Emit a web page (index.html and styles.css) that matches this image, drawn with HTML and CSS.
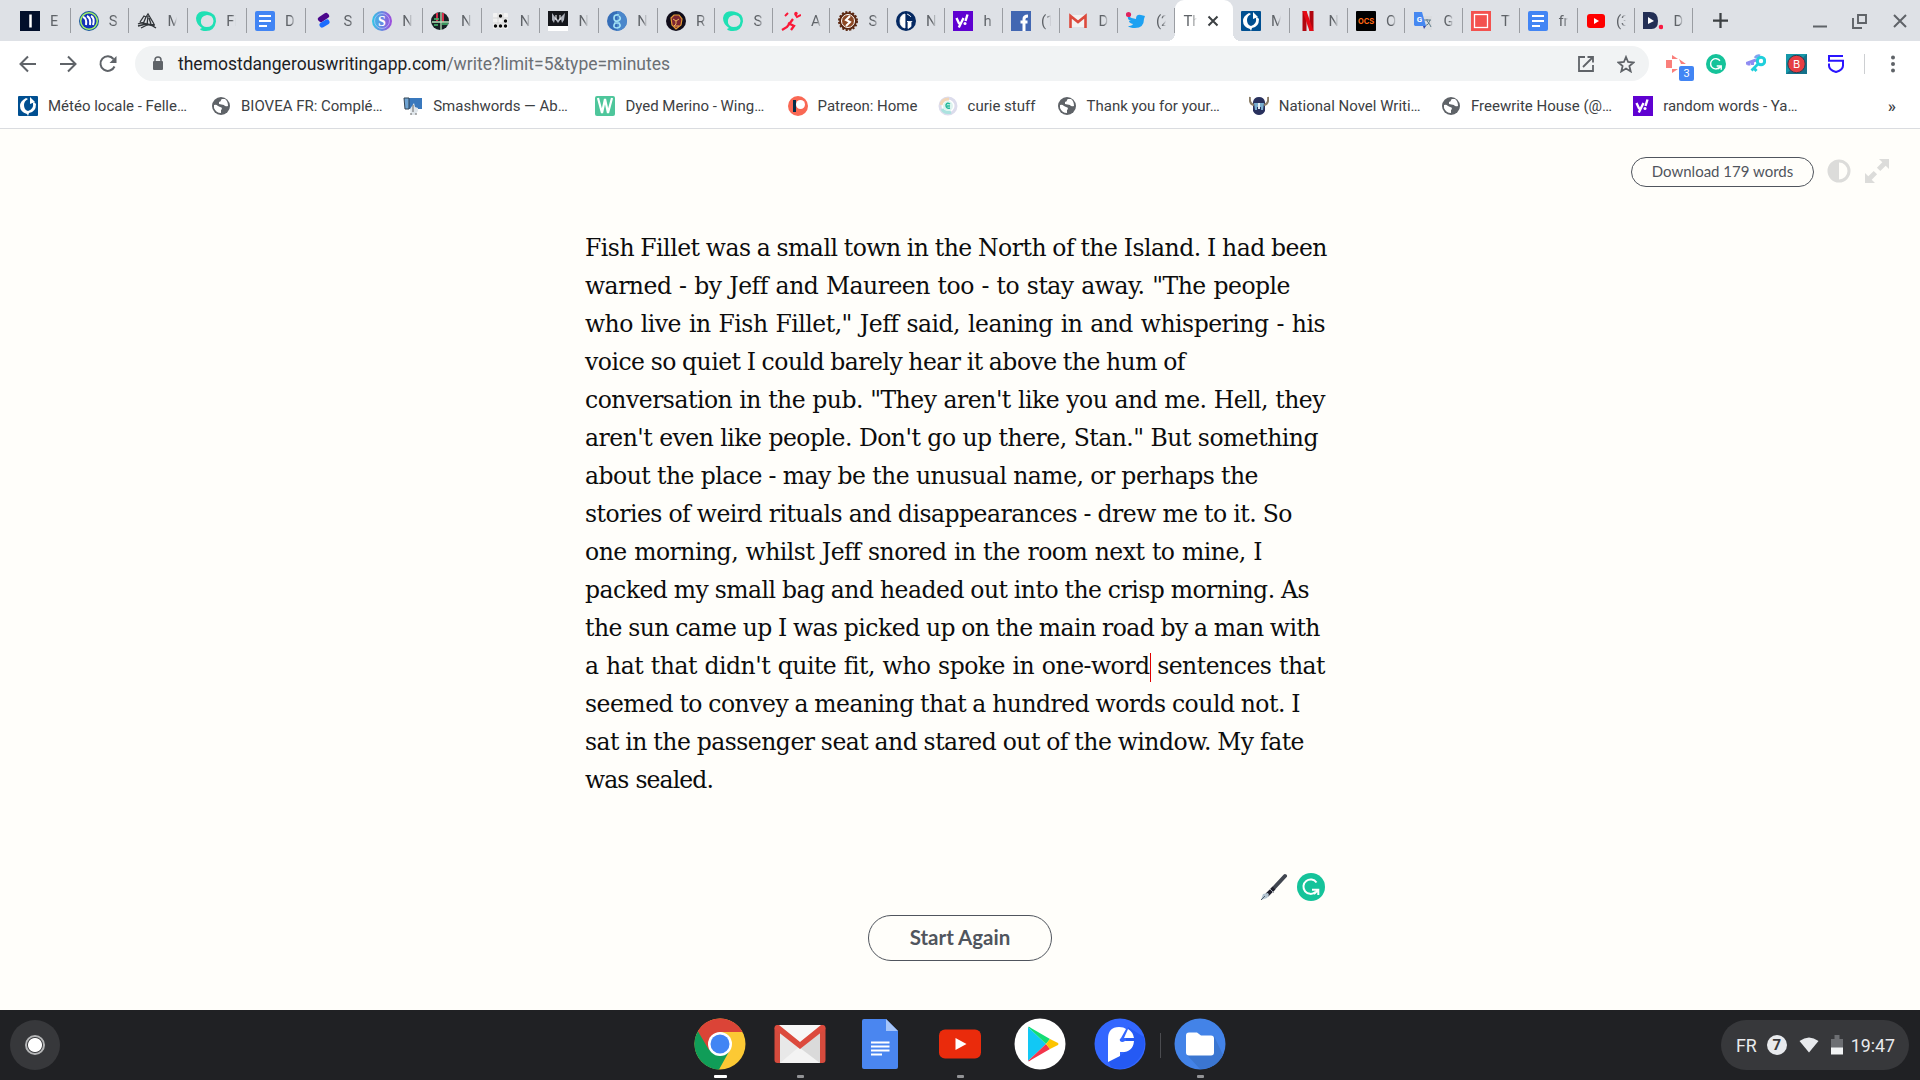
FILE: index.html
```html
<!DOCTYPE html>
<html lang="en">
<head>
    <meta charset="UTF-8">
    <meta name="viewport" content="width=device-width, initial-scale=1.0">
    <title>The Most Dangerous Writing App</title>
    <link rel="stylesheet" href="styles.css">
</head>
<body>
    <!-- Shared icons -->
    <svg class="sprite">
        <symbol id="globe" viewBox="0 0 20 20"><circle cx="10" cy="10" r="9" fill="#5f6368"/><path d="M3 9q2-1 4 1l2 1q2 0 2 2l-1 1v3q-5 0-7-5zM11 3q-2 1-1 2l-2 1v2l5 1q1 2 4 1 0-5-3-7z" fill="#fff"/></symbol>
        <symbol id="docs" viewBox="0 0 20 20"><rect width="20" height="20" rx="2" fill="#4285f4"/><path d="M4 5h12M4 10h12M4 15h8" stroke="#fff" stroke-width="2.2"/></symbol>
        <symbol id="steem" viewBox="0 0 20 20"><path d="M3 1.5Q7-.5 11 .6 20 2 20 10.500 18.500 20 10 20q-5 0-6-2l2-1Q0 13 0 7q0-3 3-5.500z" fill="#1fe0b4"/><path d="M5 12q-1-7 6-8 6 0 6.500 6-.5 6-7 6-4 0-5.500-4z" fill="#dee1e6"/></symbol>
        <symbol id="meteo" viewBox="0 0 20 20"><rect width="20" height="20" rx="1" fill="#004f91"/><path d="M8 2q-6 3-6 8 0 6 7 8l1 2 1-3q7-1 7-9l-2-2-1 1q1 6-5 8-4-1-4-6 0-4 4-6zM12 1l5 5-5 2z" fill="#fff"/></symbol>
        <symbol id="yahoo" viewBox="0 0 20 20"><rect width="20" height="20" fill="#5f01d1"/><path d="M3.500 7l2.800 6M10.500 7l-4.700 9.500M14.500 3.500l-2 6.500" stroke="#fff" stroke-width="2.400" fill="none"/><circle cx="12" cy="12.500" r="1.500" fill="#fff"/></symbol>
        <symbol id="grammarly" viewBox="0 0 28 28"><circle cx="14" cy="14" r="14" fill="#15c39a"/><path d="M19.500 9.500A7.200 7.200 0 1 0 18.500 19M15 16.800h6.300v5.200M21 17l-4 4" fill="none" stroke="#fff" stroke-width="2"/></symbol>
    </svg>

    <div class="tabstrip">
        <div class="tab wide"><svg class="favicon" viewBox="0 0 20 20"><rect width="20" height="20" fill="#020f2b"/><path d="M10.500 3.500v13" stroke="#fff" stroke-width="2.500"/></svg><span>E</span></div>
        <div class="tab wide"><svg class="favicon" viewBox="0 0 20 20"><circle cx="10" cy="10" r="10" fill="#16579a"/><circle cx="10" cy="10" r="9" fill="#a5f263"/><circle cx="10" cy="10" r="7.500" fill="#1433b8"/><path d="M4 6q4 1 3 8M8 5q4 2 3 9M12 5q4 2 2 9" stroke="#fff" stroke-width="2" fill="none"/></svg><span>S</span></div>
        <div class="tab wide"><svg class="favicon" viewBox="0 0 20 20"><path d="M3 11l4-6 2 1 2-3 6 10M9 6l-3 7M11 5l-1 9M12 7l2 6M1 13q6-3 9 1 4-1 9 3M1 15l8-2 9 1M4 17l6-3" fill="none" stroke="#303438" stroke-width="1.300"/></svg><span>M</span></div>
        <div class="tab wide"><svg class="favicon"><use href="#steem"/></svg><span>Fi</span></div>
        <div class="tab wide"><svg class="favicon"><use href="#docs"/></svg><span>D</span></div>
        <div class="tab wide"><svg class="favicon" viewBox="0 0 20 20"><path d="M7 9l6-4M6 8l6-4" stroke="#4b078c" stroke-width="4.500" stroke-linecap="round"/><path d="M8 14l5-3" stroke="#1c6dff" stroke-width="5" stroke-linecap="round"/></svg><span>S</span></div>
        <div class="tab wide"><svg class="favicon" viewBox="0 0 20 20"><defs><linearGradient id="ng"><stop stop-color="#31c7e6"/><stop offset="1" stop-color="#a049dc"/></linearGradient></defs><circle cx="10" cy="10" r="10" fill="url(#ng)"/><circle cx="10" cy="10" r="7.500" fill="none" stroke="#cbd0ff" stroke-width=".6"/><text x="10" y="15" class="glyph">S</text></svg><span>N</span></div>
        <div class="tab wide"><svg class="favicon" viewBox="0 0 20 20"><circle cx="9" cy="10" r="9" fill="#162024"/><path d="M6 2v8M12 2v9" stroke="#d52d4b" stroke-width="2"/><path d="M3 8h5M11 13h6M3 14h4" stroke="#45bd70" stroke-width="1.500"/><path d="M10 1v18M1 11h17" stroke="#b7e6bb" stroke-width="1.300"/></svg><span>N</span></div>
        <div class="tab wide"><svg class="favicon" viewBox="0 0 20 20"><rect x="3" y="2" width="15" height="16" rx="1" fill="#f2f2f2"/><path d="M8 2v16M13 2v16M3 7h15M3 12h15" stroke="#ccc" stroke-width=".7"/><g fill="#080808"><circle cx="10.500" cy="5" r="1.700"/><circle cx="15.500" cy="10" r="1.700"/><circle cx="5.500" cy="15" r="1.700"/><circle cx="10.500" cy="15" r="1.700"/><circle cx="15.500" cy="15" r="1.700"/></g></svg><span>N</span></div>
        <div class="tab wide"><svg class="favicon" viewBox="0 0 20 20"><rect width="20" height="20" fill="#fff"/><rect width="20" height="15" fill="#15171c"/><path d="M4 2l3 4 3 3 3-3 4-4-1 7-2 3-1-4-3 4-3-4-1 4-2-3z" fill="#adb1bb"/><path d="M8 4v5M12 4v5" stroke="#fff"/></svg><span>N</span></div>
        <div class="tab wide"><svg class="favicon" viewBox="0 0 20 20"><circle cx="10" cy="10" r="10" fill="#356eb8"/><path d="M10 0a10 10 0 0 1 0 20z" fill="#4b87cb"/><path d="M12 4q-5-1-5 3t4 3q4-2 1-5M8 12q-3 5 2 5 5-1 2-5z" fill="none" stroke="#a2e2f5" stroke-width="1.700"/></svg><span>N</span></div>
        <div class="tab"><svg class="favicon" viewBox="0 0 20 20"><circle cx="10" cy="10" r="10" fill="#110d1b"/><path d="M5 7l3-3h5l3 4-1 6-5 4-4-4z" fill="#7c2532" stroke="#e49b35" stroke-width="1.200"/><path d="M7 8l3 2 3-2M10 10v3l-2 2h5" fill="none" stroke="#efb45a"/></svg><span>R</span></div>
        <div class="tab"><svg class="favicon"><use href="#steem"/></svg><span>S</span></div>
        <div class="tab"><svg class="favicon" viewBox="0 0 20 20"><g fill="none" stroke="#fa1838" stroke-width="2.300"><path d="M1 19l5-3 3-4 3-4M7 12l6 3-3 4"/></g><path d="M4 5l3-3M14 3l2 3 4-2" fill="none" stroke="#fa1838" stroke-width="2"/><circle cx="15" cy="2.500" r="1.700" fill="#fa1838"/></svg><span>A</span></div>
        <div class="tab"><svg class="favicon" viewBox="0 0 20 20"><circle cx="10" cy="10" r="8.800" fill="#5b2812" stroke="#5b2812" stroke-width="2.400" stroke-dasharray="2 1.500"/><circle cx="10" cy="10" r="6.500" fill="#8c4824" stroke="#fff"/><path d="M12 5l-4 4 4 2-4 4" fill="none" stroke="#fff" stroke-width="2"/></svg><span>S</span></div>
        <div class="tab"><svg class="favicon" viewBox="0 0 20 20"><circle cx="10" cy="10" r="10" fill="#052962"/><path d="M9 3q-5 1-5 7t5 7V3zM11 3q3 1 4 3M11 10.500h5l-1 1v4l-3 2v-7z" fill="#fff" stroke="#fff" stroke-width=".8"/></svg><span>N</span></div>
        <div class="tab"><svg class="favicon"><use href="#yahoo"/></svg><span>h</span></div>
        <div class="tab"><svg class="favicon" viewBox="0 0 20 20"><rect width="20" height="20" fill="#4267b2"/><path d="M13 20V8q0-3 4-3M9.500 11h7" stroke="#fff" stroke-width="3" fill="none"/></svg><span>(1</span></div>
        <div class="tab"><svg class="favicon" viewBox="0 0 20 20"><path d="M3 4h14v12H3z" fill="#f2f2f2"/><path d="M2.500 17V5l7.500 6 7.500-6v12" stroke="#dc4a3d" stroke-width="2.600" fill="none"/></svg><span>D</span></div>
        <div class="tab"><svg class="favicon" viewBox="0 0 20 20"><path d="M2 5q4 3 8 3 0-5 5-4l4 1-1 3q0 9-9 9-5 0-7-2 4 0 5-2-4-1-4-3l2 0Q1 9 2 5z" fill="#1da1f2"/><circle cx="2.500" cy="3.500" r="2.600" fill="#e0245e"/></svg><span>(2</span></div>
        <div class="tab active"><span>Th</span><svg class="close" viewBox="0 0 12 12"><path d="M1.500 1.500l9 9M10.500 1.500l-9 9" stroke="#3c4043" stroke-width="2"/></svg></div>
        <div class="tab"><svg class="favicon"><use href="#meteo"/></svg><span>M</span></div>
        <div class="tab"><svg class="favicon" viewBox="0 0 20 20"><path d="M4.500 0h4v20h-4zM11.500 0h4v20h-4z" fill="#b1060f"/><path d="M4.500 0h4l7 20h-4z" fill="#e50914"/></svg><span>N</span></div>
        <div class="tab"><svg class="favicon" viewBox="0 0 20 20"><rect width="20" height="20" rx="1" fill="#000"/><text x="10" y="12.700" class="ocs">OCS</text></svg><span>O</span></div>
        <div class="tab"><svg class="favicon" viewBox="0 0 20 20"><path d="M8 5h11v14h-8z" fill="#dadce0"/><path d="M11 9h7M14 8v2q3 3 4 6M17 9q-1 5-5 6" stroke="#607d8b" fill="none"/><path d="M1 1h8l4 14H2l-1-1z" fill="#4688f1"/><path d="M10 15h3l-2 3z" fill="#3749ab"/><text x="6.500" y="11" class="g-small">G</text></svg><span>G</span></div>
        <div class="tab"><svg class="favicon" viewBox="0 0 20 20"><rect width="20" height="20" fill="#f3524f"/><rect x="3.500" y="3.500" width="13" height="13" fill="none" stroke="#fff" stroke-width="1.300"/></svg><span>T</span></div>
        <div class="tab"><svg class="favicon"><use href="#docs"/></svg><span>fr</span></div>
        <div class="tab"><svg class="favicon" viewBox="0 0 20 20"><rect x="1" y="3" width="18" height="14" rx="3" fill="#f00"/><path d="M8 7l5 3-5 3z" fill="#fff"/></svg><span>(3</span></div>
        <div class="tab"><svg class="favicon" viewBox="0 0 20 20"><path d="M0 1h7q8 0 8 9t-8 8H0z" fill="#232f55"/><path d="M5 6l6 4-6 3z" fill="#fff"/><circle cx="18" cy="16" r="2.300" fill="#f91942"/></svg><span>D</span></div>
        <svg class="new-tab" viewBox="0 0 16 16"><path d="M8 0v16M0 8h16" stroke="#3c4043" stroke-width="2.400"/></svg>
        <div class="window-buttons">
            <svg viewBox="0 0 16 16"><path d="M1 13.500h14" stroke="#5f6368" stroke-width="2"/></svg>
            <svg viewBox="0 0 16 16"><path d="M6 2h8v8H6zM1 5v10h9" fill="none" stroke="#5f6368" stroke-width="1.900"/></svg>
            <svg viewBox="0 0 16 16"><path d="M2 2l12 12M14 2L2 14" stroke="#5f6368" stroke-width="2"/></svg>
        </div>
    </div>

    <div class="toolbar">
        <div class="tool"><svg width="18" height="18" viewBox="0 0 18 18"><path d="M17 9H2M9 1.500L1.500 9 9 16.500" class="stroke"/></svg></div>
        <div class="tool"><svg width="18" height="18" viewBox="0 0 18 18"><path d="M1 9h15M9 1.500L16.500 9 9 16.500" class="stroke"/></svg></div>
        <div class="tool"><svg width="18" height="18" viewBox="0 0 18 18"><path d="M15.500 11.500A7.300 7.300 0 1 1 14.500 4" class="stroke"/><path d="M17.500 1v7h-7z" fill="#5f6368"/></svg></div>
        <div class="omnibox">
            <svg class="lock" viewBox="0 0 12 15"><path d="M3 6V4a3 3 0 0 1 6 0v2" fill="none" stroke="#5f6368" stroke-width="1.500"/><rect x="1" y="5" width="10" height="9" rx="1" fill="#5f6368"/></svg>
            <div class="url">themostdangerouswritingapp.com<span>/write?limit=5&amp;type=minutes</span></div>
            <div class="tool"><svg width="16" height="16" viewBox="0 0 16 16"><path d="M7 1H1v14h14V9M9.500 1H15v5.500M14.500 1.500L5 11" class="stroke thin"/></svg></div>
            <div class="tool"><svg width="18" height="18" viewBox="0 0 18 18"><path d="M9 2l2.100 5 5.400.5-4.100 3.600 1.300 5.300L9 13.600l-4.700 2.800 1.300-5.300-4.100-3.600 5.400-.5z" class="stroke thin"/></svg></div>
        </div>
        <div class="extensions">
            <div class="tool ext"><svg width="20" height="18" viewBox="0 0 20 18"><path d="M0 5h6v8H0zM6 0l6 4H6zM13 4l7 5h-5zM6 18l6-4H6z" fill="#fa7f7b"/></svg><b class="badge">3</b></div>
            <div class="tool"><svg width="20" height="20"><use href="#grammarly"/></svg></div>
            <div class="tool"><svg width="20" height="20" viewBox="0 0 20 20"><path d="M0 9.500l10-3.500M3 8.500v3M6.500 8v3" stroke="#8f8cf2" stroke-width="3"/><path d="M9 4q2-3 5-2" fill="none" stroke="#7fa4f0" stroke-width="3"/><circle cx="15" cy="7" r="3.700" fill="none" stroke="#20cfdb" stroke-width="3"/><path d="M12.500 9.500L5.500 16.500M8 14l2.500 3" stroke="#20cfdb" stroke-width="2.800"/></svg></div>
            <div class="tool"><svg width="21" height="20" viewBox="0 0 21 20"><rect width="21" height="20" fill="#14718a"/><path d="M0 0h21L0 20z" fill="#1698a9"/><circle cx="10.500" cy="10" r="8.700" fill="#e53e43" stroke="#263f54"/><text x="10.500" y="14" class="b-letter">B</text></svg></div>
            <div class="tool"><svg width="16" height="18" viewBox="0 0 16 18"><path d="M15 1H1v4.800h14v5q0 4.200-7 6.200-7-2-7-6.200V8.500" fill="none" stroke="#2a14ff" stroke-width="2"/></svg></div>
        </div>
        <svg class="menu" viewBox="0 0 4 18"><g fill="#5f6368"><circle cx="2" cy="2.500" r="2"/><circle cx="2" cy="9" r="2"/><circle cx="2" cy="15.500" r="2"/></g></svg>
    </div>

    <div class="bookmarks">
        <div class="bookmark"><svg class="favicon"><use href="#meteo"/></svg>Météo locale - Felle…</div>
        <div class="bookmark"><svg class="favicon"><use href="#globe"/></svg>BIOVEA FR: Complé…</div>
        <div class="bookmark"><svg class="favicon" viewBox="0 0 20 20"><path d="M1 2h18v11H4z" fill="#3978bd"/><path d="M1 2h5v11H2z" fill="#70a4d3" stroke="#345"/><path d="M8 19l-1-6 4-6 1 4 3 1v3l-3 4z" fill="#e0e6eb"/><path d="M10 9v7M8 17v2M13 17v2" stroke="#666"/></svg>Smashwords — Ab…</div>
        <div class="bookmark"><svg class="favicon" viewBox="0 0 20 20"><rect width="20" height="20" rx="2" fill="#4ec69b"/><path d="M3 2l4 15 3-14 3 14 4-15" fill="none" stroke="#fff" stroke-width="2.200"/></svg>Dyed Merino - Wing…</div>
        <div class="bookmark patreon"><svg class="favicon" viewBox="0 0 20 20"><circle cx="10" cy="10" r="10" fill="#f96854"/><path d="M5 4h3v12H5z" fill="#052d49"/><circle cx="12.500" cy="8.500" r="4.500" fill="#fff"/></svg>Patreon: Home</div>
        <div class="bookmark curie"><svg class="favicon" viewBox="0 0 20 20"><circle cx="10" cy="10" r="8" fill="none" stroke="#dcdcec" stroke-width="3"/><path d="M3 9q1-6 8-6" fill="none" stroke="#f1d5b7" stroke-width="3"/><path d="M4 13q3 5 9 3" fill="none" stroke="#abe2df" stroke-width="3"/><circle cx="10" cy="10" r="5" fill="#ddf4ef"/><path d="M12 8q-3-2-4 1 0 4 4 3M9 10h3" fill="none" stroke="#23b99a" stroke-width="1.500"/></svg>curie stuff</div>
        <div class="bookmark"><svg class="favicon"><use href="#globe"/></svg>Thank you for your…</div>
        <div class="bookmark"><svg class="favicon" viewBox="0 0 20 20"><path d="M4 6q1-5 6-5t6 5v9q-2 4-6 4t-6-4z" fill="#29315d"/><path d="M1 1q-1 7 4 8M19 1q1 7-4 8" fill="none" stroke="#8b7d67" stroke-width="2"/><path d="M5 7h10l-1 7h-2v-3H8v3H6z" fill="#7bafd0"/><path d="M10 7v6" stroke="#e2edf2" stroke-width="2"/></svg>National Novel Writi…</div>
        <div class="bookmark"><svg class="favicon"><use href="#globe"/></svg>Freewrite House (@…</div>
        <div class="bookmark"><svg class="favicon"><use href="#yahoo"/></svg>random words - Ya…</div>
        <span class="overflow">»</span>
    </div>

    <main>
        <div class="actions">
            <button class="download">Download 179 words</button>
            <svg width="24" height="24" viewBox="0 0 24 24"><circle cx="12" cy="12" r="10" fill="none" stroke="#dcdcda" stroke-width="3"/><path d="M12 2a10 10 0 0 0 0 20z" fill="#dcdcda"/></svg>
            <svg width="24" height="24" viewBox="0 0 24 24"><path d="M14 0h10v10l-3.300-3.300-5.400 5.400-3.400-3.400 5.400-5.400zM10 24H0V14l3.300 3.300 5.400-5.400 3.400 3.400-5.400 5.400z" fill="#dcdcda"/></svg>
        </div>

        <div class="editor">
            <span>Fish Fillet was a small town in the North of the Island. I had been</span>
            <span>warned - by Jeff and Maureen too - to stay away. "The people</span>
            <span>who live in Fish Fillet," Jeff said, leaning in and whispering - his</span>
            <span>voice so quiet I could barely hear it above the hum of</span>
            <span>conversation in the pub. "They aren't like you and me. Hell, they</span>
            <span>aren't even like people. Don't go up there, Stan." But something</span>
            <span>about the place - may be the unusual name, or perhaps the</span>
            <span>stories of weird rituals and disappearances - drew me to it. So</span>
            <span>one morning, whilst Jeff snored in the room next to mine, I</span>
            <span>packed my small bag and headed out into the crisp morning. As</span>
            <span>the sun came up I was picked up on the main road by a man with</span>
            <span>a hat that didn't quite fit, who spoke in one-word<i class="caret"></i> sentences that</span>
            <span>seemed to convey a meaning that a hundred words could not. I</span>
            <span>sat in the passenger seat and stared out of the window. My fate</span>
            <span>was sealed.</span>
        </div>

        <div class="helpers">
            <svg width="28" height="28" viewBox="0 0 28 28"><path d="M12 17L25 3" stroke="#414650" stroke-width="4" stroke-linecap="round"/><path d="M7 22l7-7" stroke="#20202c" stroke-width="4"/><path d="M10 16l4 4" stroke="#a3abb2" stroke-width="1"/><path d="M8 20l-5 1-2 6 6-2 2-3z" fill="#b4c4d0"/><path d="M1 27l4-4" stroke="#52616d"/></svg>
            <svg width="28" height="28"><use href="#grammarly"/></svg>
        </div>
        <button class="restart">Start Again</button>
    </main>

    <div class="shelf">
        <div class="launcher"><i></i></div>
        <div class="apps">
            <div class="app current"><svg viewBox="0 0 52 52"><circle cx="26" cy="26" r="25.500" fill="#fcc934"/><path d="M26 26L3.900 13.200A25.500 25.500 0 0 0 25 51.500L37 30z" fill="#109d58"/><path d="M3.900 13.200A25.500 25.500 0 0 1 48.500 14H26L15 32z" fill="#db4437"/><circle cx="26" cy="26" r="12" fill="#fff"/><circle cx="26" cy="26" r="9.500" fill="#4285f4"/></svg></div>
            <div class="app open"><svg viewBox="0 0 52 52"><rect x=".5" y="7" width="51" height="38" rx="3" fill="#d54b3d"/><path d="M6 7h40v38H6z" fill="#e8e8e8"/><path d="M6 45l20-17 20 17z" fill="#f3f3f3"/><path d="M26 30L46 15v30z" fill="#dadada"/><path d="M4 7h44L26 24z" fill="#f7f7f7"/><path d="M.5 11Q1 7 5 7l21 17L47 7q4 0 4.500 4l-25.500 20z" fill="#dc4a3d"/></svg></div>
            <div class="app"><svg viewBox="0 0 52 52"><path d="M10 1h22l12 12v36q0 2-2 2H10q-2 0-2-2V3q0-2 2-2z" fill="#4a86f0"/><path d="M32 1l12 12H32z" fill="#a6c5fa"/><path d="M17 24.500h18.500M17 28.500h18.500M17 32.500h18.500M17 36.500h11" stroke="#fff" stroke-width="2"/></svg></div>
            <div class="app open"><svg viewBox="0 0 52 52"><rect x="5" y="11.500" width="42" height="29" rx="6" fill="#ea2b0c"/><path d="M21.500 20l11 6-11 6z" fill="#fff"/></svg></div>
            <div class="app"><svg viewBox="0 0 52 52"><circle cx="26" cy="26" r="25.500" fill="#fff"/><path d="M14 9v34l18-17z" fill="#12c8f5"/><path d="M14 9q1-1 3 1l19 11-4 5z" fill="#13dc76"/><path d="M14 43q1 1 3-1l19-11-4-5z" fill="#f2354c"/><path d="M36 21l8 4q1 1 0 2l-8 4-4-5z" fill="#fdc400"/></svg></div>
            <div class="app"><svg viewBox="0 0 52 52"><circle cx="26" cy="26" r="25.500" fill="#3367ff"/><path d="M34 9l16 10q3 15-9 26-12 9-24 4l-2-5 15-9z" fill="#255af4"/><path d="M14 44V21Q14 9 25 9q5 0 7 2l-5 9q-2 1-1 3 2 2 5 0h9q-1 12-14 11v4z" fill="#fff"/><path d="M34 11q5 3 6 9l-10 0z" fill="#fff"/></svg></div>
            <div class="divider"></div>
            <div class="app open"><svg viewBox="0 0 52 52"><circle cx="26" cy="26" r="25.500" fill="#4383e8"/><path d="M13 37l13 14q16 0 23-14L40 18z" fill="#3b76d1"/><path d="M15 14.500h8l4 3h10q3 0 3 3v14q0 3-3 3H15q-3 0-3-3v-17q0-3 3-3z" fill="#fff"/></svg></div>
        </div>
        <div class="status">
            <span>FR</span>
            <b class="count">7</b>
            <svg width="20" height="16" viewBox="0 0 20 16"><path d="M.5 4Q10-3 19.500 4L10 15.500z" fill="#e8eaed"/></svg>
            <svg class="battery" width="12" height="20" viewBox="0 0 12 20"><path d="M3.500 0h5v4H12v9H0V4h3.500z" fill="#6d6f73"/><path d="M0 12.500h12V19.500H0z" fill="#f1f3f4"/></svg>
            <span>19:47</span>
        </div>
    </div>
</body>
</html>
```
FILE: styles.css
```css
* {
    box-sizing: border-box;
}

body {
    margin: 0;
    width: 1920px;
    height: 1080px;
    display: flex;
    flex-direction: column;
    overflow: hidden;
    font-family: Roboto, sans-serif;
    font-size: 15px;
    color: #3c4043;
    background: #fffefa;
}

svg {
    display: block;
    flex-shrink: 0;
}

.sprite {
    display: none;
}

.favicon {
    width: 20px;
    height: 20px;
}

/* Tabs */
.tabstrip {
    height: 41px;
    display: flex;
    align-items: center;
    padding-left: 12px;
    background: #dee1e6;
}

.tab {
    width: 57.5px;
    height: 25px;
    flex-shrink: 0;
    display: flex;
    align-items: center;
    gap: 10px;
    padding-left: 8px;
    border-right: 1px solid #9a9da2;
}

.tab.wide {
    width: 58.73px;
}

.tab span {
    width: 10px;
    overflow: hidden;
    white-space: nowrap;
    color: #5f6368;
    -webkit-mask-image: linear-gradient(to right, #000 60%, transparent);
    mask-image: linear-gradient(to right, #000 60%, transparent);
}

.tab.active {
    position: relative;
    height: 41px;
    border-right: none;
    border-radius: 9px 9px 0 0;
    background: #fff;
}

.tab.active::before,
.tab.active::after {
    content: "";
    position: absolute;
    bottom: 0;
    width: 8px;
    height: 8px;
}

.tab.active::before {
    left: -8px;
    background: radial-gradient(circle at 0 0, transparent 8px, #fff 8px);
}

.tab.active::after {
    right: -8px;
    background: radial-gradient(circle at 100% 0, transparent 8px, #fff 8px);
}

.tab.active span {
    width: 14px;
}

.tab.active .close {
    width: 12px;
    height: 12px;
}

.glyph {
    font: bold 14px "Liberation Serif", serif;
    text-anchor: middle;
    fill: #fff;
}

.ocs {
    font: bold 7.5px Inter, sans-serif;
    text-anchor: middle;
    fill: #ff6914;
}

.g-small {
    font: bold 8px Roboto, sans-serif;
    text-anchor: middle;
    fill: #fff;
}

.b-letter {
    font: 11px Inter, sans-serif;
    text-anchor: middle;
    fill: #fff;
}

.new-tab {
    width: 15px;
    height: 15px;
    margin-left: 20px;
}

.window-buttons {
    display: flex;
    gap: 24px;
    margin: 1px 12px 0 auto;
}

.window-buttons svg {
    width: 16px;
    height: 16px;
}

/* Toolbar */
.toolbar {
    height: 45px;
    display: flex;
    align-items: center;
    padding-left: 8px;
    background: #fff;
}

.tool {
    width: 40px;
    height: 35px;
    display: flex;
    align-items: center;
    justify-content: center;
}

.stroke {
    fill: none;
    stroke: #5f6368;
    stroke-width: 2;
}

.thin {
    stroke-width: 1.8;
}

.omnibox {
    width: 1514px;
    height: 35px;
    display: flex;
    align-items: center;
    margin: 0 7px;
    padding: 0 3px 0 17px;
    border-radius: 18px;
    background: #f1f3f4;
}

.lock {
    width: 12px;
    height: 15px;
    margin-right: 14px;
}

.url {
    flex: 1;
    font-size: 17.5px;
    color: #202124;
}

.url span {
    color: #6b6f74;
}

.extensions {
    display: flex;
    padding-right: 9px;
    background: linear-gradient(#cdcfd2, #cdcfd2) right center / 1px 20px no-repeat;
}

.ext {
    position: relative;
}

.badge {
    position: absolute;
    left: 23px;
    top: 20px;
    width: 15px;
    height: 15px;
    border-radius: 2px;
    font-size: 11px;
    font-weight: normal;
    line-height: 15px;
    text-align: center;
    color: #fff;
    background: #4285f4;
}

.menu {
    width: 4px;
    height: 18px;
    margin-left: 26px;
}

/* Bookmarks bar */
.bookmarks {
    height: 43px;
    display: flex;
    align-items: center;
    padding: 0 24px 3px 18px;
    border-bottom: 1px solid #dadce0;
    background: #fff;
}

.bookmark {
    width: 192.2px;
    flex-shrink: 0;
    display: flex;
    align-items: center;
    gap: 10px;
    white-space: nowrap;
}

.bookmark:first-child {
    width: 193px;
}

.bookmark.patreon {
    width: 150px;
}

.bookmark.curie {
    width: 119px;
}

.overflow {
    margin-left: auto;
    font-size: 17px;
    font-weight: 500;
}

/* Writing page */
main {
    flex: 1;
    display: flex;
    flex-direction: column;
    align-items: center;
}

button {
    padding: 0;
    border: 1px solid #50555d;
    background: none;
    font-family: Lato, sans-serif;
    color: #50555d;
}

.actions {
    width: 100%;
    height: 58px;
    display: flex;
    align-items: center;
    justify-content: flex-end;
    gap: 14px;
    padding: 28px 31px 0 0;
}

.actions svg {
    margin-top: -3px;
}

.download {
    width: 183px;
    height: 30px;
    margin-right: -1px;
    padding-bottom: 2px;
    border-radius: 15px;
    font-size: 15px;
}

.editor {
    width: 750px;
    margin-top: 42px;
    font-family: "DejaVu Serif", serif;
    font-size: 23.5px;
    letter-spacing: -0.5px;
    word-spacing: -5px;
    line-height: 38px;
    color: #0c0c0c;
}

.editor span {
    display: block;
    width: 740px;
    white-space: nowrap;
    text-align-last: justify;
}

/* Line measures */
.editor span:nth-child(1) { width: 742px; }
.editor span:nth-child(2) { width: 705px; }
.editor span:nth-child(4) { width: 600px; }
.editor span:nth-child(6) { width: 733px; }
.editor span:nth-child(7) { width: 673px; }
.editor span:nth-child(8) { width: 707px; }
.editor span:nth-child(9) { width: 677px; }
.editor span:nth-child(10) { width: 724px; }
.editor span:nth-child(11) { width: 735px; }
.editor span:nth-child(13) { width: 715px; }
.editor span:nth-child(14) { width: 719px; }
.editor span:nth-child(15) { width: 128px; letter-spacing: -0.9px; }

.caret {
    display: inline-block;
    width: 1px;
    height: 29px;
    margin-right: -1px;
    vertical-align: -8px;
    background: #e00000;
}

.helpers {
    width: 750px;
    display: flex;
    justify-content: flex-end;
    gap: 9px;
    margin-top: 74px;
    padding-right: 10px;
}

.restart {
    width: 184px;
    height: 46px;
    margin-top: 14px;
    padding-bottom: 2px;
    border-radius: 23px;
    font-size: 20.5px;
    font-weight: bold;
}

/* Shelf */
.shelf {
    height: 70px;
    display: flex;
    align-items: center;
    justify-content: space-between;
    padding: 0 11px 0 10px;
    background: #202124;
}

.launcher {
    width: 50px;
    height: 50px;
    display: flex;
    align-items: center;
    justify-content: center;
    margin-right: 139px;
    border-radius: 50%;
    background: #37383b;
}

.launcher i {
    width: 20px;
    height: 20px;
    border: 2px solid #b5b6b7;
    border-radius: 50%;
    background: radial-gradient(circle, #fff 6.5px, #37383b 7.5px);
}

.apps {
    height: 70px;
    display: flex;
    align-items: center;
}

.app {
    width: 80px;
    height: 70px;
    padding-top: 8px;
    display: flex;
    flex-direction: column;
    align-items: center;
}

.app svg {
    width: 52px;
    height: 52px;
}

.app.open::after,
.app.current::after {
    content: "";
    width: 7px;
    height: 3px;
    margin-top: 5px;
    border-radius: 1px;
    background: #929396;
}

.app.current::after {
    width: 13px;
    background: #fff;
}

.divider {
    width: 1px;
    height: 25px;
    margin-right: -1px;
    background: #4b4c50;
}

.status {
    width: 188px;
    height: 50px;
    display: flex;
    align-items: center;
    padding-left: 15px;
    border-radius: 25px;
    font-size: 17.8px;
    color: #e8eaed;
    background: #37383b;
}

.count {
    width: 20px;
    height: 20px;
    margin: 0 12px 0 10px;
    border-radius: 50%;
    font-size: 15px;
    line-height: 20px;
    text-align: center;
    color: #37383b;
    background: #e8eaed;
}

.battery {
    margin: 0 8px 0 12px;
}
```
